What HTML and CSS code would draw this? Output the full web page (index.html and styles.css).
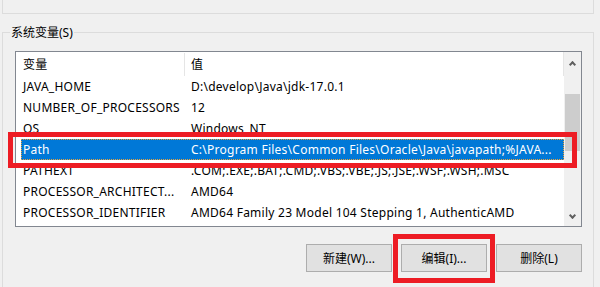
FILE: index.html
```html
<!DOCTYPE html>
<html lang="zh-CN">
<head>
    <meta charset="UTF-8">
    <title>环境变量</title>
    <link rel="stylesheet" href="styles.css">
</head>
<body>

<div class="user-group"></div>

<fieldset class="sys-group">
  <legend>系统变量(S)</legend>

  <div class="listbox">
    <div class="list-body">
      <div class="list-head">
        <span class="cell">变量</span>
        <span class="cell">值</span>
      </div>
      <div class="row"><span class="cell">JAVA_HOME</span><span class="cell">D:\develop\Java\jdk-17.0.1</span></div>
      <div class="row"><span class="cell">NUMBER_OF_PROCESSORS</span><span class="cell">12</span></div>
      <div class="row"><span class="cell">OS</span><span class="cell">Windows_NT</span></div>
      <div class="row selected"><span class="cell">Path</span><span class="cell">C:\Program Files\Common Files\Oracle\Java\javapath;%JAVA...</span></div>
      <div class="row"><span class="cell">PATHEXT</span><span class="cell">.COM;.EXE;.BAT;.CMD;.VBS;.VBE;.JS;.JSE;.WSF;.WSH;.MSC</span></div>
      <div class="row"><span class="cell">PROCESSOR_ARCHITECT...</span><span class="cell">AMD64</span></div>
      <div class="row"><span class="cell">PROCESSOR_IDENTIFIER</span><span class="cell">AMD64 Family 23 Model 104 Stepping 1, AuthenticAMD</span></div>
    </div>
    <div class="scrollbar">
      <span class="arrow up"></span>
      <span class="thumb"></span>
      <span class="arrow down"></span>
    </div>
  </div>

  <div class="buttons">
    <button type="button">新建(W)...</button>
    <button type="button">编辑(I)...</button>
    <button type="button">删除(L)</button>
  </div>
</fieldset>

<!-- 标注框 -->
<div class="mark mark-path"></div>
<div class="mark mark-edit"></div>

</body>
</html>
```

FILE: styles.css
```css
html{
  box-sizing: border-box;
}
*, *::before, *::after{
  box-sizing: inherit;
}

body{
  margin: 0;
  width: 600px;
  height: 287px;
  overflow: hidden;
  position: relative;
  background-color: #f0f0f0;
  color: #000;
  font-family: "Noto Sans", "Noto Sans CJK SC", sans-serif;
  font-size: 12px;
}

.user-group{
  margin-left: 2px;
  width: 592px;
  height: 14px;
  border: 1px solid #dcdcdc;
  border-top: none;
}

.sys-group{
  margin: 10px 0 0 2px;
  width: 592px;
  height: 263px;
  padding: 1px 0 0 7px;
  border: 1px solid #dcdcdc;
  border-bottom: none;
}

.sys-group legend{
  padding: 0 1px;
  line-height: 17px;
}

.listbox{
  display: flex;
  margin: 9px 0 0 5px;
  width: 567px;
  height: 176px;
  border: 1px solid #828790;
  background-color: #fff;
}

.list-body{
  flex: 1;
  padding-left: 5px;
  letter-spacing: 0.25px;
}

.list-head, .row{
  display: grid;
  grid-template-columns: 164px 1fr;
  align-items: center;
}

.list-head{
  height: 24px;
  border-right: 1px solid #e5e5e5;
}
.list-head .cell:first-child{
  height: 23px;
  line-height: 23px;
  border-right: 1px solid #e5e5e5;
}

.row{
  height: 21px;
}

.cell{
  padding-left: 2px;
  white-space: nowrap;
  overflow: hidden;
}
.cell + .cell{
  padding-left: 6px;
}

.row.selected{
  background-color: #0078d7;
  color: #fff;
  outline: 1px dotted #e8a23c;
  outline-offset: -1px;
}

.scrollbar{
  width: 17px;
  display: flex;
  flex-direction: column;
  align-items: center;
  background-color: #f0f0f0;
}

.arrow{
  width: 17px;
  height: 17px;
  display: flex;
  align-items: center;
  justify-content: center;
}
.arrow::before{
  content: "";
  width: 5px;
  height: 5px;
  border-left: 2px solid #606060;
  border-top: 2px solid #606060;
  transform: rotate(45deg);
}
.arrow.up{
  margin-top: 2px;
}
.arrow.up::before{
  margin-top: 3px;
}
.arrow.down{
  margin-top: auto;
  margin-bottom: 1px;
}
.arrow.down::before{
  margin-top: -3px;
  transform: rotate(225deg);
}

.thumb{
  width: 15px;
  height: 57px;
  margin-top: 23px;
  background-color: #cdcdcd;
}

.buttons{
  display: flex;
  justify-content: flex-end;
  gap: 9px;
  width: 572px;
  margin-top: 17px;
}

.buttons button{
  width: 86px;
  height: 28px;
  padding: 0;
  border: 1px solid #adadad;
  background-color: #e1e1e1;
  color: #000;
  font: inherit;
}

.mark{
  position: absolute;
  border: 5px solid #ed1c24;
}
.mark-path{
  left: 8px;
  top: 132px;
  width: 569px;
  height: 36px;
}
.mark-edit{
  left: 393px;
  top: 234px;
  width: 102px;
  height: 49px;
}
```
